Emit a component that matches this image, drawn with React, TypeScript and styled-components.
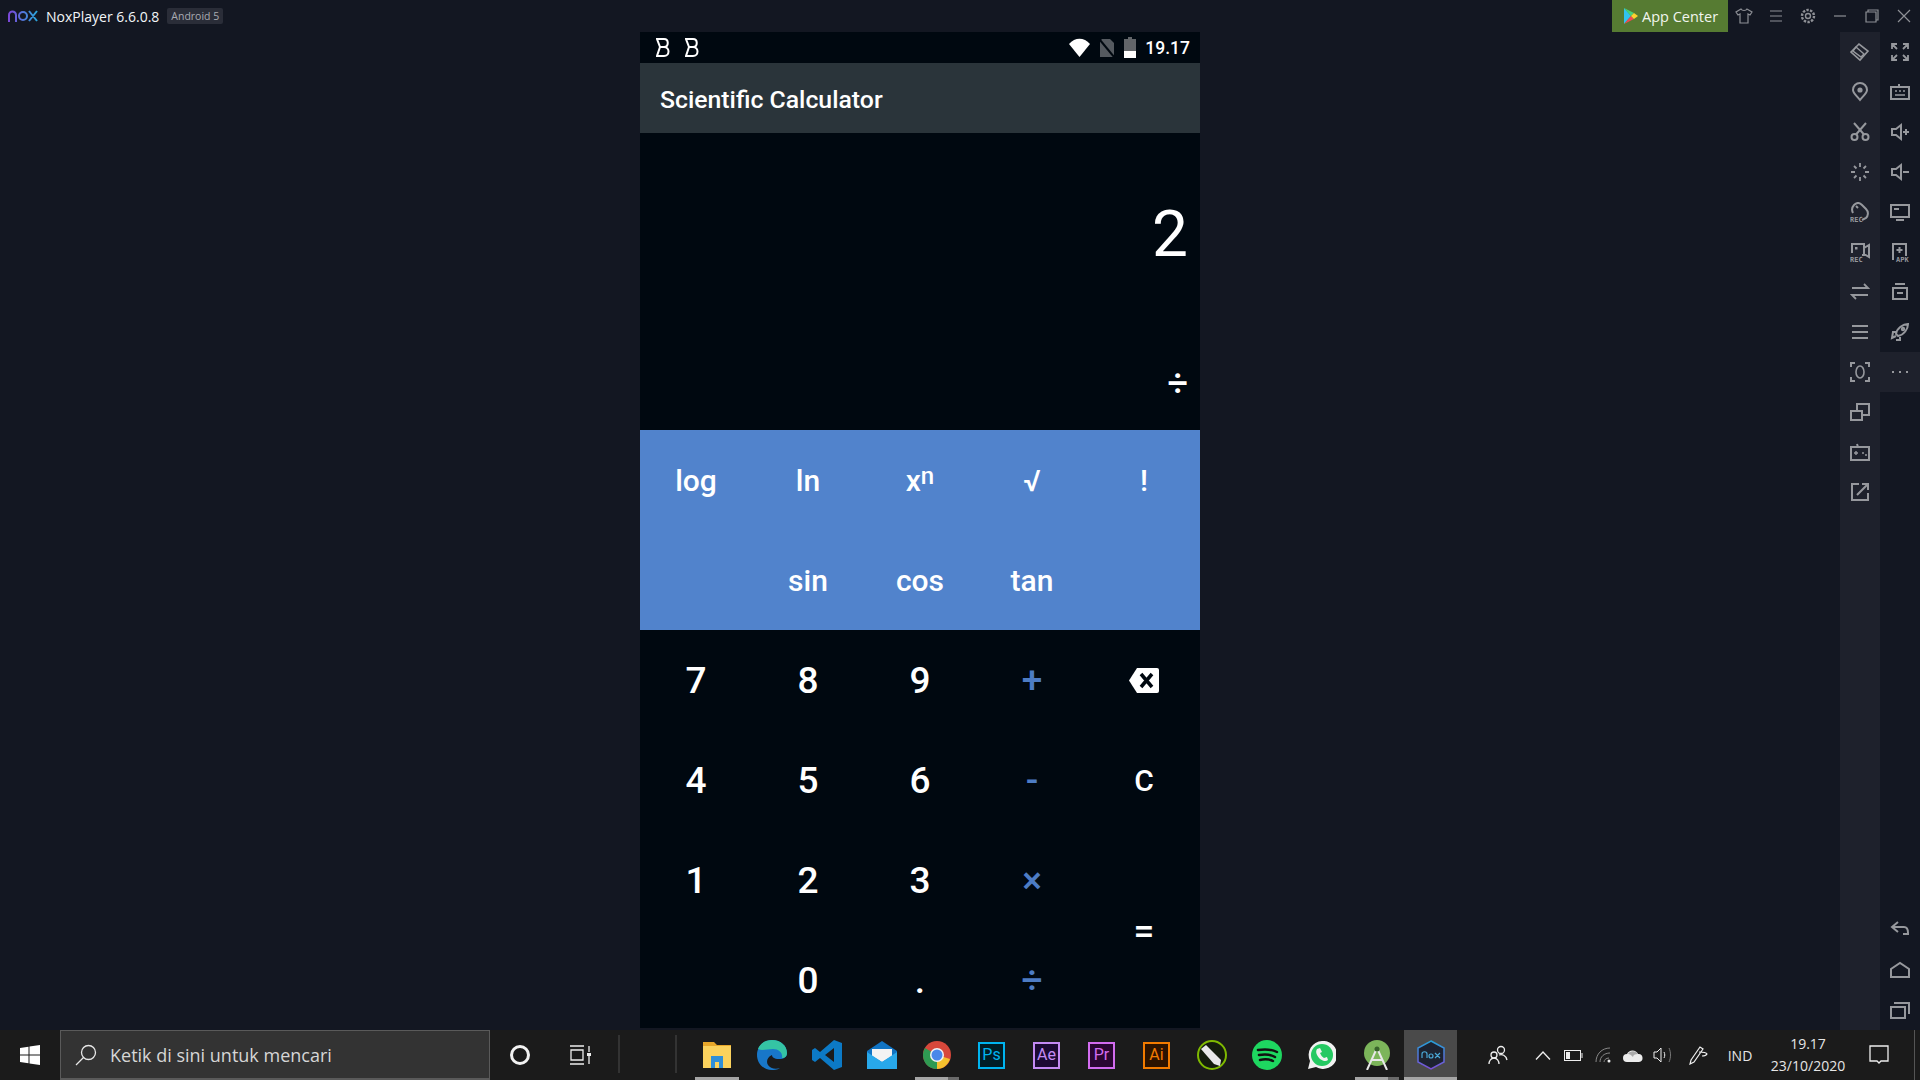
import styled, { createGlobalStyle } from 'styled-components';
import type { ReactNode } from 'react';

const GlobalStyle = createGlobalStyle`
  html, body { margin: 0; padding: 0; background: #131722; overflow: hidden; }
`;

const UI_FONT = `"Open Sans", "Noto Sans", sans-serif`;
const APP_FONT = `Roboto, "Noto Sans", sans-serif`;

const Screen = styled.div`
  width: 1920px;
  height: 1080px;
  display: flex;
  flex-direction: column;
  background: #131722;
  overflow: hidden;
`;

/* title bar */
const TopBar = styled.header`
  height: 32px;
  flex: none;
  display: flex;
  align-items: center;
  padding-left: 8px;
  font-family: ${UI_FONT};
`;

const AppTitle = styled.span`
  margin-left: 8px;
  color: #f2f5f8;
  font-size: 14px;
`;

const VersionBadge = styled.span`
  margin-left: 8px;
  height: 16px;
  padding: 0 4px;
  display: flex;
  align-items: center;
  border-radius: 2px;
  background: #2a2d38;
  color: #a9abb2;
  font-size: 10.5px;
`;

const Spacer = styled.div`
  flex: 1;
`;

const AppCenter = styled.div`
  width: 116px;
  height: 32px;
  display: flex;
  align-items: center;
  gap: 4px;
  padding-left: 12px;
  box-sizing: border-box;
  background: #567b32;
  color: #f1f5ee;
  font-size: 14.5px;
`;

const WindowButtons = styled.div`
  display: flex;
  align-items: center;
  color: #8e9096;
  padding-right: 1px;
`;

const WindowButton = styled.div<{ $w: number }>`
  width: ${(p) => p.$w}px;
  height: 32px;
  display: flex;
  align-items: center;
  justify-content: center;
`;

/* middle part */
const Middle = styled.div`
  flex: 1;
  display: flex;
  min-height: 0;
`;

const Stage = styled.main`
  flex: 1;
  display: flex;
  justify-content: center;
`;

const Phone = styled.section`
  width: 560px;
  height: 996px;
  display: flex;
  flex-direction: column;
  background: #000810;
  overflow: hidden;
  font-family: ${APP_FONT};
  color: #fff;
`;

const StatusBar = styled.div`
  height: 31px;
  flex: none;
  display: flex;
  align-items: center;
  padding: 0 10px 0 16px;
`;

const NotifyIcons = styled.div`
  display: flex;
  gap: 15px;
`;

const StatusIcons = styled.div`
  margin-left: auto;
  display: flex;
  align-items: center;
  gap: 9px;
`;

const StatusTime = styled.span`
  font-size: 17.5px;
  font-weight: 500;
  line-height: 1;
  padding-top: 2px;
`;

const ActionBar = styled.div`
  height: 70px;
  flex: none;
  display: flex;
  align-items: center;
  padding: 2px 0 0 20px;
  box-sizing: border-box;
  background: #2a343a;
  font-size: 24.8px;
  font-weight: 500;
`;

const Display = styled.div`
  height: 297px;
  flex: none;
  display: flex;
  flex-direction: column;
  align-items: flex-end;
  padding-right: 12px;
  box-sizing: border-box;
`;

const Result = styled.div`
  margin-top: 60px;
  font-size: 64px;
  font-weight: 400;
  line-height: 84px;
`;

const Operator = styled.div`
  margin-top: 89px;
  font-size: 36px;
  font-weight: 500;
  line-height: 36px;
`;

const KeyGrid = styled.div<{ $science?: boolean }>`
  display: grid;
  flex: none;
  grid-template-columns: repeat(5, 112px);
  grid-auto-rows: 100px;
  background: ${(p) => (p.$science ? '#5183cc' : 'transparent')};
`;

const Key = styled.div<{ $accent?: boolean; $small?: boolean; $tall?: boolean; $col?: number }>`
  display: flex;
  align-items: center;
  justify-content: center;
  font-weight: 500;
  font-size: ${(p) => (p.$small ? 30 : 37)}px;
  color: ${(p) => (p.$accent ? '#4d7cc4' : '#fff')};
  ${(p) => (p.$tall ? 'grid-row: span 2;' : '')}
  ${(p) => (p.$col ? `grid-column: ${p.$col};` : '')}

  sup {
    font-size: 24px;
    line-height: 0;
    position: relative;
    top: -4px;
  }
`;

/* emulator toolbar */
const Rail = styled.aside`
  width: 80px;
  flex: none;
  display: flex;
`;

const RailColumn = styled.div<{ $shaded?: boolean }>`
  width: 40px;
  display: flex;
  flex-direction: column;
  background: ${(p) => (p.$shaded ? '#1e212c' : 'transparent')};
`;

const RailButton = styled.div<{ $active?: boolean }>`
  height: 40px;
  flex: none;
  display: flex;
  align-items: center;
  justify-content: center;
  color: #96989d;
  background: ${(p) => (p.$active ? '#1e212c' : 'transparent')};
`;

const RailBottom = styled.div`
  margin-top: auto;
  display: flex;
  flex-direction: column;
`;

const Glyph = styled.svg`
  display: block;
  fill: none;
  stroke: currentColor;
  stroke-width: 2;
`;

const TinyLabel = styled.text`
  font-family: "DejaVu Sans Mono", monospace;
  font-size: 7px;
  font-weight: 700;
  fill: currentColor;
  stroke: none;
`;

/* windows taskbar */
const TaskBar = styled.footer`
  height: 50px;
  flex: none;
  display: flex;
  align-items: stretch;
  background: #1b1b1b;
  font-family: ${UI_FONT};
  color: #eee;
`;

const StartButton = styled.div`
  width: 60px;
  flex: none;
  display: flex;
  align-items: center;
  justify-content: center;
`;

const SearchBox = styled.div`
  width: 430px;
  flex: none;
  box-sizing: border-box;
  display: flex;
  align-items: center;
  gap: 13px;
  padding-left: 14px;
  background: #333;
  border: 1px solid #5a5a5a;
  border-bottom-width: 2px;
  font-size: 18px;
  color: #d6d6d6;
`;

const ShellButton = styled.div`
  width: 60px;
  flex: none;
  display: flex;
  align-items: center;
  justify-content: center;
`;

const Separators = styled.div`
  width: 55px;
  height: 38px;
  margin: 5px 0 0 8px;
  flex: none;
  border-left: 2px solid #333;
  border-right: 2px solid #333;
`;

const TaskApps = styled.div`
  margin-left: 12px;
  display: flex;
`;

const TaskSlot = styled.div<{ $open?: boolean; $stacked?: boolean; $active?: boolean }>`
  position: relative;
  width: ${(p) => (p.$active ? 53 : 55)}px;
  flex: none;
  display: flex;
  align-items: center;
  justify-content: center;
  box-sizing: border-box;
  background: ${(p) => (p.$active ? '#4a4a4a' : 'transparent')};

  &::after {
    content: '';
    display: ${(p) => (p.$open || p.$active ? 'block' : 'none')};
    position: absolute;
    bottom: 0;
    left: ${(p) => (p.$active ? 0 : 5.5)}px;
    right: ${(p) => (p.$active ? 0 : 5.5)}px;
    height: 3px;
    background: ${(p) =>
      p.$stacked ? 'linear-gradient(90deg, #a5a5a5 75%, #6a6a6a 75%)' : '#a5a5a5'};
  }
`;

const AdobeTile = styled.div<{ $color: string; $bg: string }>`
  width: 27px;
  height: 27px;
  box-sizing: border-box;
  display: flex;
  align-items: center;
  justify-content: center;
  border: 2px solid ${(p) => p.$color};
  background: ${(p) => p.$bg};
  color: ${(p) => p.$color};
  font-family: ${APP_FONT};
  font-size: 16px;
  line-height: 1;
`;

const Tray = styled.div`
  margin-left: auto;
  display: flex;
  align-items: center;
  color: #e6e6e6;
  height: 100%;
`;

const TrayIcon = styled.div<{ $w: number }>`
  width: ${(p) => p.$w}px;
  display: flex;
  justify-content: center;
`;

const TrayLang = styled.span`
  width: 44px;
  text-align: center;
  font-size: 14px;
`;

const Clock = styled.div`
  width: 92px;
  text-align: center;
  font-size: 14px;
  line-height: 22px;
`;

const NotifyArea = styled.div`
  width: 61px;
  height: 100%;
  display: flex;
  align-items: center;
  justify-content: center;
  box-sizing: border-box;
  padding-right: 10px;
  border-right: 1px solid #555;
  margin-right: 5px;
`;

const Icon = ({ size = 20, children }: { size?: number; children: ReactNode }) => (
  <Glyph width={size} height={size} viewBox="0 0 20 20">
    {children}
  </Glyph>
);

const leftRail: ReactNode[] = [
  <><path d="M1 10 9 2l9 7-8 9z" strokeWidth="1.6" /><path d="M6 5l8 7-3 3-8-6z" strokeWidth="1.4" /></>,
  <><path d="M10 18C6 13 3 11 3 8a7 7 0 0 1 14 0c0 3-3 5-7 10z" /><circle cx="10" cy="8" r="1.6" fill="currentColor" /></>,
  <><circle cx="4.5" cy="15" r="3" /><circle cx="15.5" cy="15" r="3" /><path d="M6 12.5 16 1M14 12.5 4 1" /></>,
  <path d="M10 1v4M10 15v4M1 10h4M15 10h4M4 4l2.5 2.5M13.500 13.500 16 16M4 16l2.500-2.500M13.500 6.500 16 4" strokeWidth="1.800" />,
  <><path d="M3 11a7 7 0 0 1 1-8c3-3 6-2 8 0l4 4c3 3 2 7 0 9l-4 2" /><path d="M6 4l2 2" /><TinyLabel x="0" y="19.500">REC</TinyLabel></>,
  <><path d="M2 11V2h12v11h-2M14 6l5-3v12l-5-3" /><rect x="5" y="5" width="2.500" height="2.500" fill="currentColor" stroke="none" /><TinyLabel x="0" y="19.500">REC</TinyLabel></>,
  <path d="M2 6h16L14 2M18 13H2l4 4" strokeWidth="1.800" />,
  <path d="M2 4h16M2 10h16M2 16h16" strokeWidth="1.800" />,
  <><path d="M1 5V1h4M15 1h4v4M1 15v4h4M15 19h4v-4" /><ellipse cx="10" cy="10" rx="4" ry="6" strokeWidth="1.600" /></>,
  <><path d="M1 9h11v9H1z" /><path d="M7 9V2h12v11h-7" /></>,
  <><path d="M1 5h18v13H1zM8 5 7 2" /><path d="M4 11h4M6 9v4" strokeWidth="1.400" /><circle cx="13" cy="11" r="1" fill="currentColor" stroke="none" /><circle cx="16" cy="13" r="1" fill="currentColor" stroke="none" /></>,
  <path d="M9 2H2v16h16v-7M7 13 17 3M12 2h6v6" />,
];

const rightRail: ReactNode[] = [
  <path d="M2 2l5 5M2 7V2h5M18 2l-5 5M13 2h5v5M2 18l5-5M2 13v5h5M18 18l-5-5M13 18h5v-5" strokeWidth="1.800" />,
  <><path d="M1 5h18v12H1zM9 5V2" /><path d="M5 9h2M9 9h2M13 9h2M5 13h10" strokeWidth="1.600" /></>,
  <><path d="M2 7v6h4l5 4V3L6 7z" /><path d="M13 10h6M16 7v6" /></>,
  <><path d="M2 7v6h4l5 4V3L6 7z" /><path d="M13 10h6" /></>,
  <><path d="M1 3h18v12H1z" /><path d="M4 7h5M6 18h8" /></>,
  <><path d="M3 18V2h13v12" /><path d="M9.500 5v6M6.500 8h6" /><TinyLabel x="6" y="19.500">APK</TinyLabel></>,
  <><path d="M5 2h10M3 6h14v11H3z" /><path d="M7 11h6" /></>,
  <><path d="M6 12C7 6 13 2 18 2c0 5-4 11-10 12zM6 10H3l-1 6 4-2M10 15v3l-4 0" /><circle cx="13" cy="7" r="1.200" /></>,
  <path d="M2 10h2M9 10h2M16 10h2" strokeWidth="2" />,
];

const navRail: ReactNode[] = [
  <path d="M8 2 2 7l6 5M2 7h12c4 0 4 4 4 6v1h-5" />,
  <path d="M1 17V9l9-6 9 6v8z" />,
  <><path d="M1 7h14v11H1z" /><path d="M4 3h15v11" /></>,
];

const scienceKeys: ReactNode[] = ['log', 'ln', <>x<sup>n</sup></>, '√', '!'];

const taskIcons: Record<string, ReactNode> = {
  files: (
    <svg width="28" height="26" viewBox="0 0 28 26">
      <path d="M0 0h11l3 3h14v3H0z" fill="#e8a72a" />
      <path d="M0 4h28v22H0z" fill="#fbd25d" />
      <path d="M8 26V14h12v12h-4v-6h-4v6z" fill="#2f8fd8" />
    </svg>
  ),
  edge: (
    <svg width="30" height="30" viewBox="0 0 30 30">
      <path d="M15 0c9 0 15 6 15 13 0 4-3 6-8 6-5 0-7-2-7-4-5 2-6 7-4 10 2 3 7 5 12 3-3 2-6 2-8 2C6 30 0 23 0 15 0 6 7 0 15 0z" fill="#1877c9" />
      <path d="M1 9C3 3 9 0 15 0c9 0 15 6 15 13 0 3-2 5-5 5 1-5-3-9-9-9-6 0-11 2-15 0z" fill="#35c4a4" />
    </svg>
  ),
  code: (
    <svg width="30" height="30" viewBox="0 0 30 30">
      <path d="M22 0l8 3v24l-8 3L8 18l-5 4-3-2V10l3-2 5 4z" fill="#0c7ac6" />
      <path d="M22 8l-9 7 9 7z" fill="#1b1b1b" />
      <path d="M0 11l3-2 5 6-5 6-3-2z" fill="#0c7ac6" />
    </svg>
  ),
  mail: (
    <svg width="30" height="28" viewBox="0 0 30 28">
      <path d="M0 10 15 0l15 10v18H0z" fill="#1074c4" />
      <path d="M5 8h20v7l-10 6-10-6z" fill="#f3f3f3" />
      <path d="M0 11l15 10 15-10v17H0z" fill="#28a8ea" />
    </svg>
  ),
  chrome: (
    <svg width="28" height="28" viewBox="0 0 28 28">
      <circle cx="14" cy="14" r="14" fill="#d8483b" />
      <path d="M14 14 27 18c-2 6-7 10-13 10z" fill="#f6c02d" />
      <path d="M14 14v14C5 28 0 21 0 14c0-3 1-5 2-7z" fill="#2f9a52" />
      <circle cx="14" cy="14" r="7" fill="#f3f3f3" />
      <circle cx="14" cy="14" r="5.500" fill="#4b87ea" />
    </svg>
  ),
  pencil: (
    <svg width="30" height="30" viewBox="0 0 30 30">
      <circle cx="15" cy="15" r="14" fill="#141c0d" stroke="#7fba00" strokeWidth="2" />
      <path d="M4 9l5-4 15 15-1 6-6-2z" fill="#e8e8e8" />
    </svg>
  ),
  spotify: (
    <svg width="30" height="30" viewBox="0 0 30 30">
      <circle cx="15" cy="15" r="15" fill="#1ed760" />
      <path d="M6 10c6-1 13-1 19 2M7 15c5-1 11-1 16 2M8 20c4-1 9-1 13 1" fill="none" stroke="#111" strokeWidth="2.500" strokeLinecap="round" />
    </svg>
  ),
  whatsapp: (
    <svg width="28" height="28" viewBox="0 0 28 28">
      <path d="M14 0a14 14 0 1 1-6 26l-8 2 2-8A14 14 0 0 1 14 0z" fill="#f2f2f2" />
      <circle cx="14" cy="14" r="11" fill="#25c962" />
      <path d="M9 8c-2 3 0 7 3 10 3 2 6 3 8 1l-1-3-3 1c-2-1-3-3-4-5l2-1-2-4z" fill="#f2f2f2" />
    </svg>
  ),
  studio: (
    <svg width="28" height="30" viewBox="0 0 28 30">
      <circle cx="14" cy="13" r="13" fill="#7cb55a" />
      <path d="M14 8 4 30M14 8l10 22M8 20h12" fill="none" stroke="#e8e8e8" strokeWidth="2" />
      <circle cx="14" cy="9" r="2.500" fill="#38632b" />
    </svg>
  ),
  nox: (
    <svg width="28" height="30" viewBox="0 0 28 30">
      <defs>
        <linearGradient id="noxEdge" x1="0" y1="0" x2="0" y2="1">
          <stop offset="0" stopColor="#26a0d8" />
          <stop offset="1" stopColor="#7b4fd8" />
        </linearGradient>
      </defs>
      <path d="M14 1 27 8v14l-13 7-13-7V8z" fill="#1d2230" stroke="url(#noxEdge)" strokeWidth="1.500" />
      <path d="M5 18v-4c0-3 5-3 5 0v4M12 16a2 2 0 1 0 4 0 2 2 0 1 0-4 0M18 13l5 5M23 13l-5 5" fill="none" stroke="#4aa7d6" strokeWidth="1.200" />
    </svg>
  ),
};

const App = () => {
  return (
    <Screen>
      <GlobalStyle />
      <TopBar>
        <svg width="30" height="14" viewBox="0 0 30 14">
          <defs>
            <linearGradient id="noxLogo" x1="0" y1="0" x2="1" y2="0">
              <stop offset="0" stopColor="#7b48d8" />
              <stop offset="1" stopColor="#2aa5dc" />
            </linearGradient>
          </defs>
          <path d="M1 13V6a3 3 0 0 1 7 0v7M11 7a4 4 0 1 0 8 0 4 4 0 1 0-8 0M21 2l8 10M29 2l-8 10" fill="none" stroke="url(#noxLogo)" strokeWidth="2" />
        </svg>
        <AppTitle>NoxPlayer 6.6.0.8</AppTitle>
        <VersionBadge>Android 5</VersionBadge>
        <Spacer />
        <AppCenter>
          <svg width="14" height="16" viewBox="0 0 14 16">
            <path d="M0 0v16l7-8z" fill="#31c3ee" />
            <path d="M0 0l7 8 3-3z" fill="#45d27b" />
            <path d="M0 16l7-8 3 3z" fill="#ee4a54" />
            <path d="M10 5l4 3-4 3-3-3z" fill="#fbd12f" />
          </svg>
          App Center
        </AppCenter>
        <WindowButtons>
          <WindowButton $w={32}>
            <Glyph width="18" height="18" viewBox="0 0 18 18" style={{ strokeWidth: 1.2 }}>
              <path d="M6 2 1 5l2 3 2-1v9h8V7l2 1 2-3-5-3c-1 2-5 2-6 0z" />
            </Glyph>
          </WindowButton>
          <WindowButton $w={32}>
            <Glyph width="14" height="14" viewBox="0 0 14 14" style={{ strokeWidth: 1.2 }}>
              <path d="M1 2h12M1 7h12M1 12h12" />
            </Glyph>
          </WindowButton>
          <WindowButton $w={32}>
            <Glyph width="16" height="16" viewBox="0 0 16 16" style={{ strokeWidth: 1.4 }}>
              <circle cx="8" cy="8" r="2.500" />
              <circle cx="8" cy="8" r="6" strokeDasharray="2.400 1.300" strokeWidth="2.400" />
            </Glyph>
          </WindowButton>
          <WindowButton $w={32}>
            <Glyph width="14" height="14" viewBox="0 0 14 14" style={{ strokeWidth: 1.2 }}>
              <path d="M1 7h12" />
            </Glyph>
          </WindowButton>
          <WindowButton $w={32}>
            <Glyph width="14" height="14" viewBox="0 0 14 14" style={{ strokeWidth: 1.2 }}>
              <path d="M1 3h10v10H1zM3 3V1h10v10h-2" />
            </Glyph>
          </WindowButton>
          <WindowButton $w={31}>
            <Glyph width="14" height="14" viewBox="0 0 14 14" style={{ strokeWidth: 1.2 }}>
              <path d="M1 1l12 12M13 1 1 13" />
            </Glyph>
          </WindowButton>
        </WindowButtons>
      </TopBar>

      <Middle>
        <Stage>
          <Phone>
            <StatusBar>
              <NotifyIcons>
                {[0, 1].map((i) => (
                  <svg key={i} width="14" height="19" viewBox="0 0 14 19" fill="none" stroke="#fff" strokeWidth="2">
                    <path d="M1 1h7c5 0 5 8 0 8H4h4c6 0 6 9 0 9H1l3-9z" />
                  </svg>
                ))}
              </NotifyIcons>
              <StatusIcons>
                <svg width="21" height="19" viewBox="0 0 21 19">
                  <path d="M10.500 19 0 6c6-7 15-7 21 0z" fill="#fff" />
                </svg>
                <svg width="16" height="18" viewBox="0 0 16 18">
                  <path d="M3 0h8l4 4v14H1V2z" fill="#555a60" />
                  <path d="M1 1l14 17" stroke="#000810" strokeWidth="2" />
                </svg>
                <svg width="12" height="21" viewBox="0 0 12 21">
                  <path d="M4 0h4v2h4v19H0V2h4z" fill="#626569" />
                  <path d="M0 14h12v7H0z" fill="#fff" />
                </svg>
                <StatusTime>19.17</StatusTime>
              </StatusIcons>
            </StatusBar>
            <ActionBar>Scientific Calculator</ActionBar>
            <Display>
              <Result>2</Result>
              <Operator>÷</Operator>
            </Display>
            <KeyGrid $science>
              {scienceKeys.map((label, i) => (
                <Key key={i} $small>{label}</Key>
              ))}
              <Key $small $col={2}>sin</Key>
              <Key $small>cos</Key>
              <Key $small>tan</Key>
            </KeyGrid>
            <KeyGrid>
              <Key>7</Key>
              <Key>8</Key>
              <Key>9</Key>
              <Key $accent>+</Key>
              <Key>
                <svg width="30" height="25" viewBox="0 0 30 25">
                  <path d="M8 0h20a2 2 0 0 1 2 2v21a2 2 0 0 1-2 2H8L0 12.500z" fill="#fff" />
                  <path d="M12 6l11 13M23 6 12 19" stroke="#000810" strokeWidth="3.500" />
                </svg>
              </Key>
              <Key>4</Key>
              <Key>5</Key>
              <Key>6</Key>
              <Key $accent>-</Key>
              <Key $small>C</Key>
              <Key>1</Key>
              <Key>2</Key>
              <Key>3</Key>
              <Key $accent>×</Key>
              <Key $tall>=</Key>
              <Key $col={2}>0</Key>
              <Key>.</Key>
              <Key $accent>÷</Key>
            </KeyGrid>
          </Phone>
        </Stage>
        <Rail>
          <RailColumn $shaded>
            {leftRail.map((icon, i) => (
              <RailButton key={i}>
                <Icon>{icon}</Icon>
              </RailButton>
            ))}
          </RailColumn>
          <RailColumn>
            {rightRail.map((icon, i) => (
              <RailButton key={i} $active={i === rightRail.length - 1}>
                <Icon>{icon}</Icon>
              </RailButton>
            ))}
            <RailBottom>
              {navRail.map((icon, i) => (
                <RailButton key={i}>
                  <Icon>{icon}</Icon>
                </RailButton>
              ))}
            </RailBottom>
          </RailColumn>
        </Rail>
      </Middle>

      <TaskBar>
        <StartButton>
          <svg width="20" height="20" viewBox="0 0 20 20">
            <path d="M0 3l8.500-1.200v7.700H0zM9.500 1.600 20 0v9.500H9.500zM0 10.500h8.500v7.700L0 17zM9.500 10.500H20V20L9.500 18.400z" fill="#fff" />
          </svg>
        </StartButton>
        <SearchBox>
          <svg width="22" height="22" viewBox="0 0 22 22" fill="none" stroke="#e8e8e8" strokeWidth="1.300">
            <circle cx="13.500" cy="8.500" r="7" />
            <path d="M8.500 13.500 1 21" />
          </svg>
          Ketik di sini untuk mencari
        </SearchBox>
        <ShellButton>
          <svg width="22" height="22" viewBox="0 0 22 22" fill="none" stroke="#f2f2f2" strokeWidth="3">
            <circle cx="11" cy="11" r="8.500" />
          </svg>
        </ShellButton>
        <ShellButton>
          <svg width="22" height="20" viewBox="0 0 22 20" fill="none" stroke="#eee" strokeWidth="1.300">
            <path d="M1 1h14M1 19h14M2 5h12v10H2zM20 1v6M20 11v8" />
            <rect x="18" y="8" width="4" height="3" fill="#eee" stroke="none" />
          </svg>
        </ShellButton>
        <Separators />
        <TaskApps>
          <TaskSlot $open>{taskIcons.files}</TaskSlot>
          <TaskSlot>{taskIcons.edge}</TaskSlot>
          <TaskSlot>{taskIcons.code}</TaskSlot>
          <TaskSlot>{taskIcons.mail}</TaskSlot>
          <TaskSlot $open $stacked>{taskIcons.chrome}</TaskSlot>
          <TaskSlot><AdobeTile $color="#00b4f0" $bg="#001d26">Ps</AdobeTile></TaskSlot>
          <TaskSlot><AdobeTile $color="#c48af4" $bg="#1c0a33">Ae</AdobeTile></TaskSlot>
          <TaskSlot><AdobeTile $color="#d36cf0" $bg="#2a0632">Pr</AdobeTile></TaskSlot>
          <TaskSlot><AdobeTile $color="#f27b00" $bg="#2c1300">Ai</AdobeTile></TaskSlot>
          <TaskSlot>{taskIcons.pencil}</TaskSlot>
          <TaskSlot>{taskIcons.spotify}</TaskSlot>
          <TaskSlot>{taskIcons.whatsapp}</TaskSlot>
          <TaskSlot $open $stacked>{taskIcons.studio}</TaskSlot>
          <TaskSlot $active>{taskIcons.nox}</TaskSlot>
        </TaskApps>
        <Tray>
          <TrayIcon $w={60}>
            <svg width="20" height="20" viewBox="0 0 20 20" fill="none" stroke="#eee" strokeWidth="1.300">
              <circle cx="13" cy="5" r="3.500" />
              <circle cx="6" cy="10" r="3" />
              <path d="M1 19c0-3 2-6 5-6s5 3 5 6M11 10c3-1 7 0 8 5" />
            </svg>
          </TrayIcon>
          <TrayIcon $w={30}>
            <svg width="16" height="9" viewBox="0 0 16 9" fill="none" stroke="#eee" strokeWidth="1.300">
              <path d="M1 8.500 8 1l7 7.500" />
            </svg>
          </TrayIcon>
          <TrayIcon $w={30}>
            <svg width="19" height="11" viewBox="0 0 19 11" fill="none" stroke="#eee">
              <rect x=".5" y=".5" width="16" height="10" />
              <rect x="2" y="2" width="4" height="7" fill="#eee" stroke="none" />
              <path d="M18 3v5" />
            </svg>
          </TrayIcon>
          <TrayIcon $w={30}>
            <svg width="16" height="16" viewBox="0 0 16 16" fill="none" stroke="#888">
              <path d="M1 15C1 7 7 1 15 1M5 15c0-5 4-9 10-9M9 15c0-2 2-4 5-4" />
              <circle cx="14" cy="14" r="1.500" fill="#eee" stroke="none" />
            </svg>
          </TrayIcon>
          <TrayIcon $w={30}>
            <svg width="20" height="13" viewBox="0 0 20 13">
              <path d="M4 13a4 4 0 0 1 0-8 6 6 0 0 1 11 0 4 4 0 0 1 1 8z" fill="#ececec" />
              <path d="M5 5a6 6 0 0 1 10 0c-3 0-5 1-5 3-2-2-3-3-5-3z" fill="#aaa" />
            </svg>
          </TrayIcon>
          <TrayIcon $w={30}>
            <svg width="20" height="16" viewBox="0 0 20 16" fill="none" stroke="#eee">
              <path d="M1 5v6h3l4 4V1L4 5zM11 5c1 2 1 4 0 6" />
              <path d="M16 1c2 4 2 10 0 14" stroke="#777" />
            </svg>
          </TrayIcon>
          <TrayIcon $w={40}>
            <svg width="20" height="20" viewBox="0 0 20 20" fill="none" stroke="#eee" strokeWidth="1.200">
              <path d="M3 15 12 2l3 2-9 13-4 2zM11 7c3 0 7 0 8 2-1 2-3 2-5 2" />
            </svg>
          </TrayIcon>
          <TrayLang>IND</TrayLang>
          <Clock>19.17<br />23/10/2020</Clock>
          <NotifyArea>
            <svg width="20" height="20" viewBox="0 0 20 20" fill="none" stroke="#eee" strokeWidth="1.300">
              <path d="M1 1h18v15h-7l-2 2-2-2H1z" />
            </svg>
          </NotifyArea>
        </Tray>
      </TaskBar>
    </Screen>
  );
};

export default App;
